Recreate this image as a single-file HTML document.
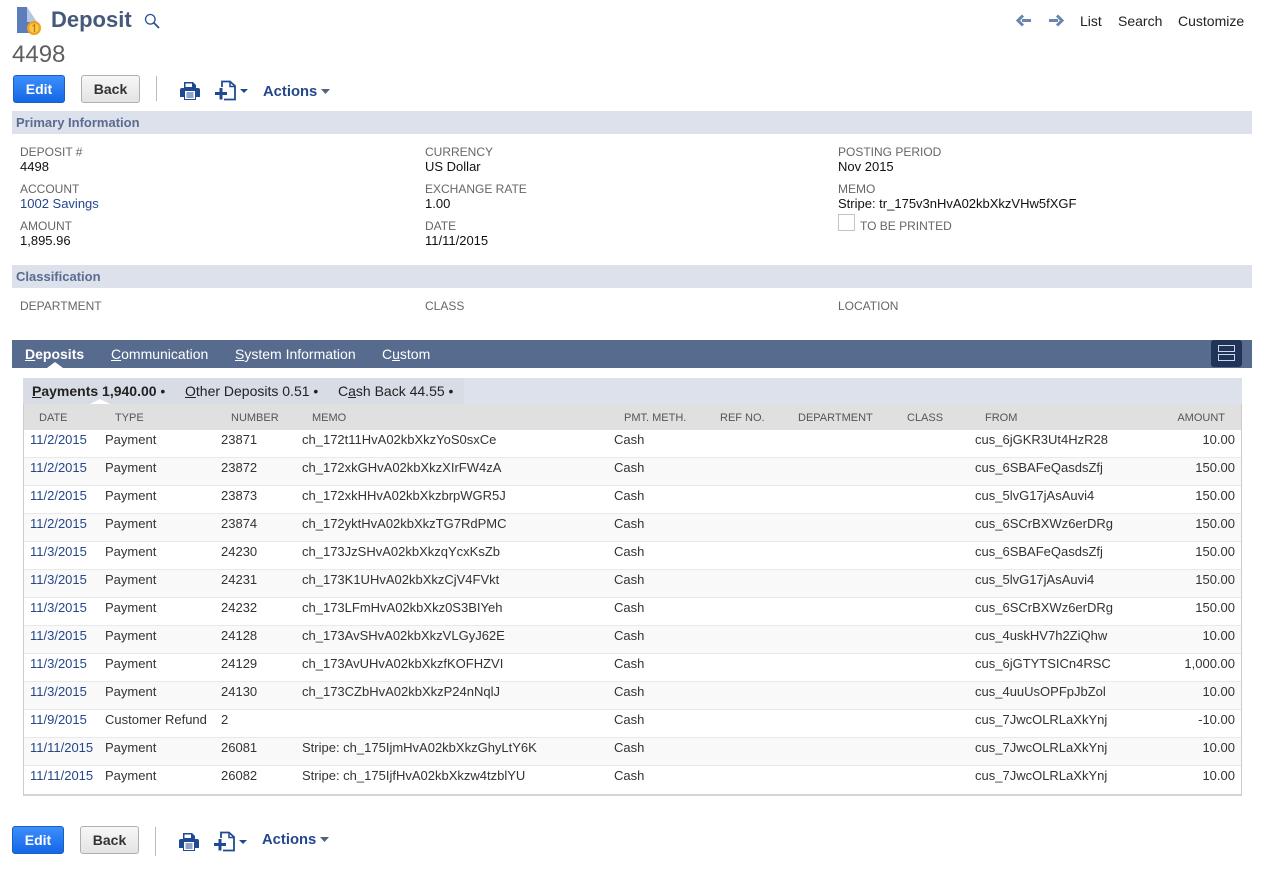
<!DOCTYPE html>
<html><head><meta charset="utf-8"><style>
*{box-sizing:border-box}
html,body{margin:0;padding:0;background:#fff}
#p{position:relative;width:1268px;height:875px;overflow:hidden;font:13px/16px "Liberation Sans",Arial,sans-serif;color:#222}
#p div,#p span.a,#p svg{position:absolute}
.t{white-space:nowrap}
.l{font-size:12px;color:#666;white-space:nowrap;line-height:14px}
.v{color:#111;white-space:nowrap;line-height:14px}
.bar{background:#dce1ec;color:#5a6c8f;font-weight:bold;left:12px;width:1240px;height:23px;line-height:23px;padding-left:4px}
.btn{border-radius:3px;text-align:center;font-weight:bold;font-size:14px;height:28px;line-height:26px}
.ed{background:linear-gradient(#3d8ffb,#1467e6);border:1px solid #1a5fc4;color:#fff;width:52px}
.bk{background:linear-gradient(#f7f7f7,#e3e3e3);border:1px solid #b0b0b0;color:#333;width:59px}
.act{color:#24468c;font-weight:bold;font-size:14.8px;white-space:nowrap}
.h{font-size:11px;color:#555;top:6px;line-height:16px;white-space:nowrap}
.r{left:0;width:1217px;height:28px;border-bottom:1px solid #e9e9e9;background:#fff}
.r.g{background:#f9f9f9}
.r span{position:absolute;top:2px;line-height:16px;white-space:nowrap;color:#333}
.r .d{left:6px;color:#24468c}.r .c1{left:81px}.r .c2{left:197px}.r .c3{left:278px}.r .c4{left:590px}.r .c5{left:951px}.r .c6{right:6px}
u{text-decoration:underline}
</style></head><body><div id="p">

<svg style="left:16px;top:6px" width="28" height="30" viewBox="0 0 28 30"><path d="M1 1H11V16H21V27H1Z" fill="#5b7dbb"/><path d="M11 1L21 16H11Z" fill="#b5c5e2"/><circle cx="18" cy="22" r="7" fill="#f2a11a"/><circle cx="18" cy="22" r="4.800" fill="#fbc94e"/><path d="M16.500 20l2-1.200V26" stroke="#c47a08" stroke-width="1.300" fill="none"/></svg>
<div class="t" style="left:51px;top:7px;font-size:22px;line-height:26px;font-weight:bold;color:#46587c">Deposit</div>
<svg style="left:144px;top:13px" width="16" height="16" viewBox="0 0 16 16"><circle cx="6.300" cy="6.300" r="4.800" fill="none" stroke="#2a5090" stroke-width="1.300"/><path d="M9.800 9.800L15 15" stroke="#2a5090" stroke-width="1.800"/></svg>

<svg style="left:1016px;top:14px" width="16" height="13" viewBox="0 0 16 13"><path d="M15 6.500H6M7 1.500L2 6.500L7 11.500" fill="none" stroke="#6a86ab" stroke-width="3"/></svg>
<svg style="left:1048px;top:14px" width="16" height="13" viewBox="0 0 16 13"><path d="M1 6.500H10M9 1.500L14 6.500L9 11.500" fill="none" stroke="#6a86ab" stroke-width="3"/></svg>
<div class="t" style="left:1080px;top:13px;font-size:14px">List</div>
<div class="t" style="left:1118px;top:13px;font-size:14px">Search</div>
<div class="t" style="left:1178px;top:13px;font-size:14px">Customize</div>

<div class="t" style="left:12px;top:41px;font-size:24px;line-height:28px;color:#5f5f5f">4498</div>

<div class="btn ed" style="left:13px;top:75px">Edit</div>
<div class="btn bk" style="left:81px;top:75px">Back</div>
<div style="left:156px;top:76px;width:1px;height:25px;background:#bbb"></div>
<svg style="left:180px;top:81px" width="20" height="20" viewBox="0 0 20 20"><path d="M4 1H13L16 4V7H4Z" fill="#1f4a92"/><path d="M5.500 2.500H12V6H5.500Z" fill="#fff"/><path d="M2 7H18Q20 7 20 9V16H16V19H4V16H0V9Q0 7 2 7Z" fill="#1f4a92"/><path d="M5 10H15V18H5Z" fill="#fff"/><path d="M6.500 12H13.500M6.500 14H13.500M6.500 16H13.500" stroke="#1f4a92"/></svg>
<svg style="left:215px;top:80px" width="34" height="21" viewBox="0 0 34 21"><path d="M7 7V1.500H15L20 6V19.500H9" fill="none" stroke="#1f4a92" stroke-width="1.800"/><path d="M15 1.500V6.500H20" fill="none" stroke="#1f4a92" stroke-width="1.500"/><path d="M0 13.500H12M6 8V19.500" stroke="#1f4a92" stroke-width="3"/><path d="M25 9H33L29 13Z" fill="#1f4a92"/></svg>
<div class="act" style="left:263px;top:84px">Actions</div>
<svg style="left:321px;top:89px" width="9" height="6"><path d="M0 0H9L4.500 5Z" fill="#53627f"/></svg>

<div class="bar" style="top:111px">Primary Information</div>

<div class="l" style="left:20px;top:145px">DEPOSIT #</div><div class="v" style="left:20px;top:160px">4498</div>
<div class="l" style="left:20px;top:182px">ACCOUNT</div><div class="v" style="left:20px;top:197px;color:#24468c">1002 Savings</div>
<div class="l" style="left:20px;top:219px">AMOUNT</div><div class="v" style="left:20px;top:234px">1,895.96</div>
<div class="l" style="left:425px;top:145px">CURRENCY</div><div class="v" style="left:425px;top:160px">US Dollar</div>
<div class="l" style="left:425px;top:182px">EXCHANGE RATE</div><div class="v" style="left:425px;top:197px">1.00</div>
<div class="l" style="left:425px;top:219px">DATE</div><div class="v" style="left:425px;top:234px">11/11/2015</div>
<div class="l" style="left:838px;top:145px">POSTING PERIOD</div><div class="v" style="left:838px;top:160px">Nov 2015</div>
<div class="l" style="left:838px;top:182px">MEMO</div><div class="v" style="left:838px;top:197px">Stripe: tr_175v3nHvA02kbXkzVHw5fXGF</div>
<div style="left:838px;top:214px;width:17px;height:17px;border:1px solid #c4c4c4;background:#fff"></div>
<div class="l" style="left:860px;top:219px">TO BE PRINTED</div>

<div class="bar" style="top:265px">Classification</div>
<div class="l" style="left:20px;top:299px">DEPARTMENT</div>
<div class="l" style="left:425px;top:299px">CLASS</div>
<div class="l" style="left:838px;top:299px">LOCATION</div>

<div style="left:12px;top:340px;width:1240px;height:28px;background:#566b8d"></div>
<div class="t" style="left:25px;top:346px;font-size:14px;font-weight:bold;color:#fff"><u>D</u>eposits</div>
<div class="t" style="left:111px;top:346px;font-size:14px;color:#fff"><u>C</u>ommunication</div>
<div class="t" style="left:235px;top:346px;font-size:14px;color:#fff"><u>S</u>ystem Information</div>
<div class="t" style="left:382px;top:346px;font-size:14px;color:#fff">C<u>u</u>stom</div>
<svg style="left:47px;top:362px" width="16" height="6"><path d="M0 6L8 0L16 6Z" fill="#fff"/></svg>
<div style="left:1211px;top:340px;width:31px;height:27px;background:#20345a;border-radius:3px"></div>
<div style="left:1218px;top:345px;width:17px;height:7px;border:1px solid #d0d7e4"></div>
<div style="left:1218px;top:354px;width:17px;height:7px;border:1px solid #d0d7e4"></div>

<div style="left:23px;top:378px;width:1219px;height:26px;background:#dce1ec"></div>
<div style="left:23px;top:378px;width:441px;height:26px;background:#d8dce5"></div>
<div class="t" style="left:32px;top:383px;font-size:14px;color:#222"><b><u>P</u>ayments 1,940.00</b> •</div>
<div class="t" style="left:185px;top:383px;font-size:14px;color:#222"><u>O</u>ther Deposits 0.51 •</div>
<div class="t" style="left:338px;top:383px;font-size:14px;color:#222">C<u>a</u>sh Back 44.55 •</div>
<svg style="left:88px;top:399px" width="24" height="6"><path d="M0 6L12 0L24 6Z" fill="#fff"/></svg>

<div style="left:23px;top:404px;width:1219px;height:392px;border:1px solid #ccc;border-top:0;border-bottom:2px solid #d4d4d4;background:#fff">
<div style="left:0;top:0;width:1217px;height:26px;background:#e0e0e0">
<span class="a h" style="left:15px">DATE</span><span class="a h" style="left:91px">TYPE</span><span class="a h" style="left:207px">NUMBER</span><span class="a h" style="left:288px">MEMO</span><span class="a h" style="left:600px">PMT. METH.</span><span class="a h" style="left:696px">REF NO.</span><span class="a h" style="left:774px">DEPARTMENT</span><span class="a h" style="left:883px">CLASS</span><span class="a h" style="left:961px">FROM</span><span class="a h" style="right:16px">AMOUNT</span>
</div>
<div class="r" style="top:26px"><span class="d">11/2/2015</span><span class="c1">Payment</span><span class="c2">23871</span><span class="c3">ch_172t11HvA02kbXkzYoS0sxCe</span><span class="c4">Cash</span><span class="c5">cus_6jGKR3Ut4HzR28</span><span class="c6">10.00</span></div>
<div class="r g" style="top:54px"><span class="d">11/2/2015</span><span class="c1">Payment</span><span class="c2">23872</span><span class="c3">ch_172xkGHvA02kbXkzXIrFW4zA</span><span class="c4">Cash</span><span class="c5">cus_6SBAFeQasdsZfj</span><span class="c6">150.00</span></div>
<div class="r" style="top:82px"><span class="d">11/2/2015</span><span class="c1">Payment</span><span class="c2">23873</span><span class="c3">ch_172xkHHvA02kbXkzbrpWGR5J</span><span class="c4">Cash</span><span class="c5">cus_5lvG17jAsAuvi4</span><span class="c6">150.00</span></div>
<div class="r g" style="top:110px"><span class="d">11/2/2015</span><span class="c1">Payment</span><span class="c2">23874</span><span class="c3">ch_172yktHvA02kbXkzTG7RdPMC</span><span class="c4">Cash</span><span class="c5">cus_6SCrBXWz6erDRg</span><span class="c6">150.00</span></div>
<div class="r" style="top:138px"><span class="d">11/3/2015</span><span class="c1">Payment</span><span class="c2">24230</span><span class="c3">ch_173JzSHvA02kbXkzqYcxKsZb</span><span class="c4">Cash</span><span class="c5">cus_6SBAFeQasdsZfj</span><span class="c6">150.00</span></div>
<div class="r g" style="top:166px"><span class="d">11/3/2015</span><span class="c1">Payment</span><span class="c2">24231</span><span class="c3">ch_173K1UHvA02kbXkzCjV4FVkt</span><span class="c4">Cash</span><span class="c5">cus_5lvG17jAsAuvi4</span><span class="c6">150.00</span></div>
<div class="r" style="top:194px"><span class="d">11/3/2015</span><span class="c1">Payment</span><span class="c2">24232</span><span class="c3">ch_173LFmHvA02kbXkz0S3BIYeh</span><span class="c4">Cash</span><span class="c5">cus_6SCrBXWz6erDRg</span><span class="c6">150.00</span></div>
<div class="r g" style="top:222px"><span class="d">11/3/2015</span><span class="c1">Payment</span><span class="c2">24128</span><span class="c3">ch_173AvSHvA02kbXkzVLGyJ62E</span><span class="c4">Cash</span><span class="c5">cus_4uskHV7h2ZiQhw</span><span class="c6">10.00</span></div>
<div class="r" style="top:250px"><span class="d">11/3/2015</span><span class="c1">Payment</span><span class="c2">24129</span><span class="c3">ch_173AvUHvA02kbXkzfKOFHZVI</span><span class="c4">Cash</span><span class="c5">cus_6jGTYTSICn4RSC</span><span class="c6">1,000.00</span></div>
<div class="r g" style="top:278px"><span class="d">11/3/2015</span><span class="c1">Payment</span><span class="c2">24130</span><span class="c3">ch_173CZbHvA02kbXkzP24nNqlJ</span><span class="c4">Cash</span><span class="c5">cus_4uuUsOPFpJbZol</span><span class="c6">10.00</span></div>
<div class="r" style="top:306px"><span class="d">11/9/2015</span><span class="c1">Customer Refund</span><span class="c2">2</span><span class="c4">Cash</span><span class="c5">cus_7JwcOLRLaXkYnj</span><span class="c6">-10.00</span></div>
<div class="r g" style="top:334px"><span class="d">11/11/2015</span><span class="c1">Payment</span><span class="c2">26081</span><span class="c3">Stripe: ch_175IjmHvA02kbXkzGhyLtY6K</span><span class="c4">Cash</span><span class="c5">cus_7JwcOLRLaXkYnj</span><span class="c6">10.00</span></div>
<div class="r" style="top:362px;border-bottom:0"><span class="d">11/11/2015</span><span class="c1">Payment</span><span class="c2">26082</span><span class="c3">Stripe: ch_175IjfHvA02kbXkzw4tzblYU</span><span class="c4">Cash</span><span class="c5">cus_7JwcOLRLaXkYnj</span><span class="c6">10.00</span></div>
</div>

<div class="btn ed" style="left:12px;top:826px">Edit</div>
<div class="btn bk" style="left:80px;top:826px">Back</div>
<div style="left:155px;top:827px;width:1px;height:29px;background:#bbb"></div>
<svg style="left:179px;top:832px" width="20" height="20" viewBox="0 0 20 20"><path d="M4 1H13L16 4V7H4Z" fill="#1f4a92"/><path d="M5.500 2.500H12V6H5.500Z" fill="#fff"/><path d="M2 7H18Q20 7 20 9V16H16V19H4V16H0V9Q0 7 2 7Z" fill="#1f4a92"/><path d="M5 10H15V18H5Z" fill="#fff"/><path d="M6.500 12H13.500M6.500 14H13.500M6.500 16H13.500" stroke="#1f4a92"/></svg>
<svg style="left:214px;top:831px" width="34" height="21" viewBox="0 0 34 21"><path d="M7 7V1.500H15L20 6V19.500H9" fill="none" stroke="#1f4a92" stroke-width="1.800"/><path d="M15 1.500V6.500H20" fill="none" stroke="#1f4a92" stroke-width="1.500"/><path d="M0 13.500H12M6 8V19.500" stroke="#1f4a92" stroke-width="3"/><path d="M25 9H33L29 13Z" fill="#1f4a92"/></svg>
<div class="act" style="left:262px;top:832px">Actions</div>
<svg style="left:320px;top:837px" width="9" height="6"><path d="M0 0H9L4.500 5Z" fill="#53627f"/></svg>

</div></body></html>
